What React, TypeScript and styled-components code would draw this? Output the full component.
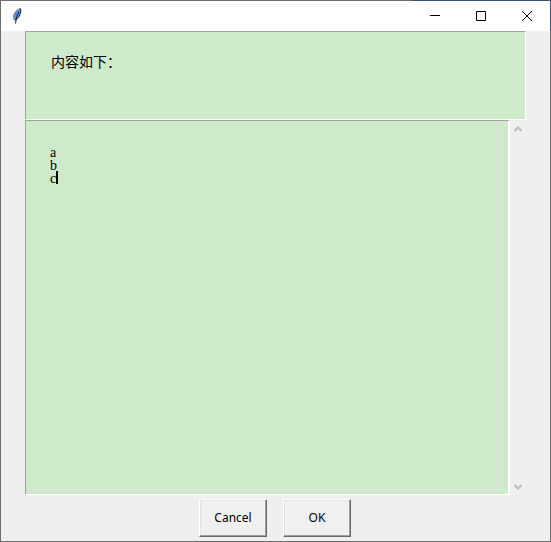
import React, { useState } from "react";
import styled, { createGlobalStyle } from "styled-components";

const GlobalStyle = createGlobalStyle`
  *, *::before, *::after { box-sizing: border-box; }
  body { margin: 0; background: #efefef; }
`;

const Window = styled.main`
  display: flex;
  flex-direction: column;
  min-height: 100vh;
  border: 1px solid #6d6d6d;
  background: #efefef;
  color: #000;
`;

const TitleBar = styled.header`
  display: flex;
  align-items: center;
  justify-content: space-between;
  height: 30px;
  padding-left: 8px;
  background: #fff;
`;

const WindowControls = styled.div`
  display: flex;
  box-shadow: 0 -1px #3b4f78, 1px 0 #3b4f78;
`;

const ControlButton = styled.button`
  display: grid;
  place-items: center;
  width: 46px;
  height: 30px;
  padding: 0;
  border: 0;
  background: transparent;
  svg { display: block; }
`;

const Content = styled.div`
  flex: 1;
  display: flex;
  flex-direction: column;
  padding: 0 24px;
`;

const Message = styled.p`
  margin: 0;
  height: 89px;
  padding: 21px 25px;
  border: 1px solid;
  border-color: #a0a0a0 #fff #fff #a0a0a0;
  background: #ceeaca;
  font: 14px/16px "Noto Sans CJK SC", sans-serif;
`;

const EditorRow = styled.div`
  flex: 1;
  display: flex;
`;

const EditorFrame = styled.div`
  position: relative;
  flex: 1;
  display: flex;
  border: 1px solid;
  border-color: #a0a0a0 #fff #fff #a0a0a0;
  border-right-width: 2px;
`;

const Editor = styled.textarea`
  flex: 1;
  min-width: 0;
  margin: 0;
  padding: 25px 24px;
  border: 0;
  outline: 0;
  resize: none;
  overflow: hidden;
  background: #ceeaca;
  color: #000;
  font: 14px/13px "Liberation Serif", serif;
`;

const Caret = styled.span`
  position: absolute;
  left: 30px;
  top: 50px;
  width: 2px;
  height: 13px;
  background: #000;
  pointer-events: none;
`;

const ScrollTrack = styled.div`
  display: flex;
  flex-direction: column;
  justify-content: space-between;
  width: 16px;
`;

const ScrollButton = styled.button`
  display: grid;
  place-items: center;
  width: 16px;
  height: 17px;
  padding: 0;
  border: 0;
  background: transparent;
`;

const Actions = styled.footer`
  display: flex;
  justify-content: center;
  gap: 16px;
  padding: 4px 1px 4px 0;
`;

const ActionButton = styled.button`
  width: 68px;
  height: 38px;
  padding: 0;
  border: 1px solid;
  border-color: #fff #696969 #696969 #fff;
  box-shadow: inset -1px -1px #a0a0a0, inset 1px 1px #e3e3e3;
  background: #f0f0f0;
  color: #000;
  font: 12px/16px "Noto Sans", sans-serif;
`;

function Feather() {
  return (
    <svg width="16" height="16" viewBox="0 0 16 16" aria-hidden="true">
      <path d="M11.5 .5 C8 1.5 4.5 5 4.5 9 L5 11.5 L7.5 11.5 C10.5 9 12.5 4 11.5 .5Z" fill="#4f8fe0" />
      <path d="M11 .5 C7.5 1.5 4.5 5 4.5 9.5 L5.5 12" fill="none" stroke="#8a8a80" />
      <path d="M11.5 .5 C12.5 4.5 10.5 9 7.5 11.5 L5.5 12" fill="none" stroke="#1c1c24" />
      <path d="M10 3.5 Q7 8 6.5 15.5" fill="none" stroke="#16243c" />
    </svg>
  );
}

function ScrollArrow({ down = false }: { down?: boolean }) {
  return (
    <svg width="8" height="6" viewBox="0 0 8 6" aria-hidden="true">
      <path d={down ? "M.5 1 L4 4.5 L7.5 1" : "M.5 5 L4 1.5 L7.5 5"} fill="none" stroke="#bfbfbf" strokeWidth="2" />
    </svg>
  );
}

export default function App() {
  const [text, setText] = useState("a\nb\nc");
  return (
    <>
      <GlobalStyle />
      <Window>
        <TitleBar>
          <Feather />
          <WindowControls>
            <ControlButton type="button" aria-label="Minimize">
              <svg width="10" height="10"><path d="M0 4.5H10" stroke="#000" /></svg>
            </ControlButton>
            <ControlButton type="button" aria-label="Maximize">
              <svg width="10" height="10"><path d="M.5 .5H9.5V9.5H.5Z" fill="none" stroke="#000" /></svg>
            </ControlButton>
            <ControlButton type="button" aria-label="Close">
              <svg width="10" height="10"><path d="M0 0L10 10M10 0L0 10" stroke="#000" /></svg>
            </ControlButton>
          </WindowControls>
        </TitleBar>
        <Content>
          <Message id="message">内容如下：</Message>
          <EditorRow>
            <EditorFrame>
              <Editor
                aria-labelledby="message"
                spellCheck={false}
                value={text}
                onChange={(event) => setText(event.target.value)}
              />
              <Caret />
            </EditorFrame>
            <ScrollTrack>
              <ScrollButton type="button" aria-label="Scroll up"><ScrollArrow /></ScrollButton>
              <ScrollButton type="button" aria-label="Scroll down"><ScrollArrow down /></ScrollButton>
            </ScrollTrack>
          </EditorRow>
          <Actions>
            <ActionButton type="button">Cancel</ActionButton>
            <ActionButton type="button">OK</ActionButton>
          </Actions>
        </Content>
      </Window>
    </>
  );
}
